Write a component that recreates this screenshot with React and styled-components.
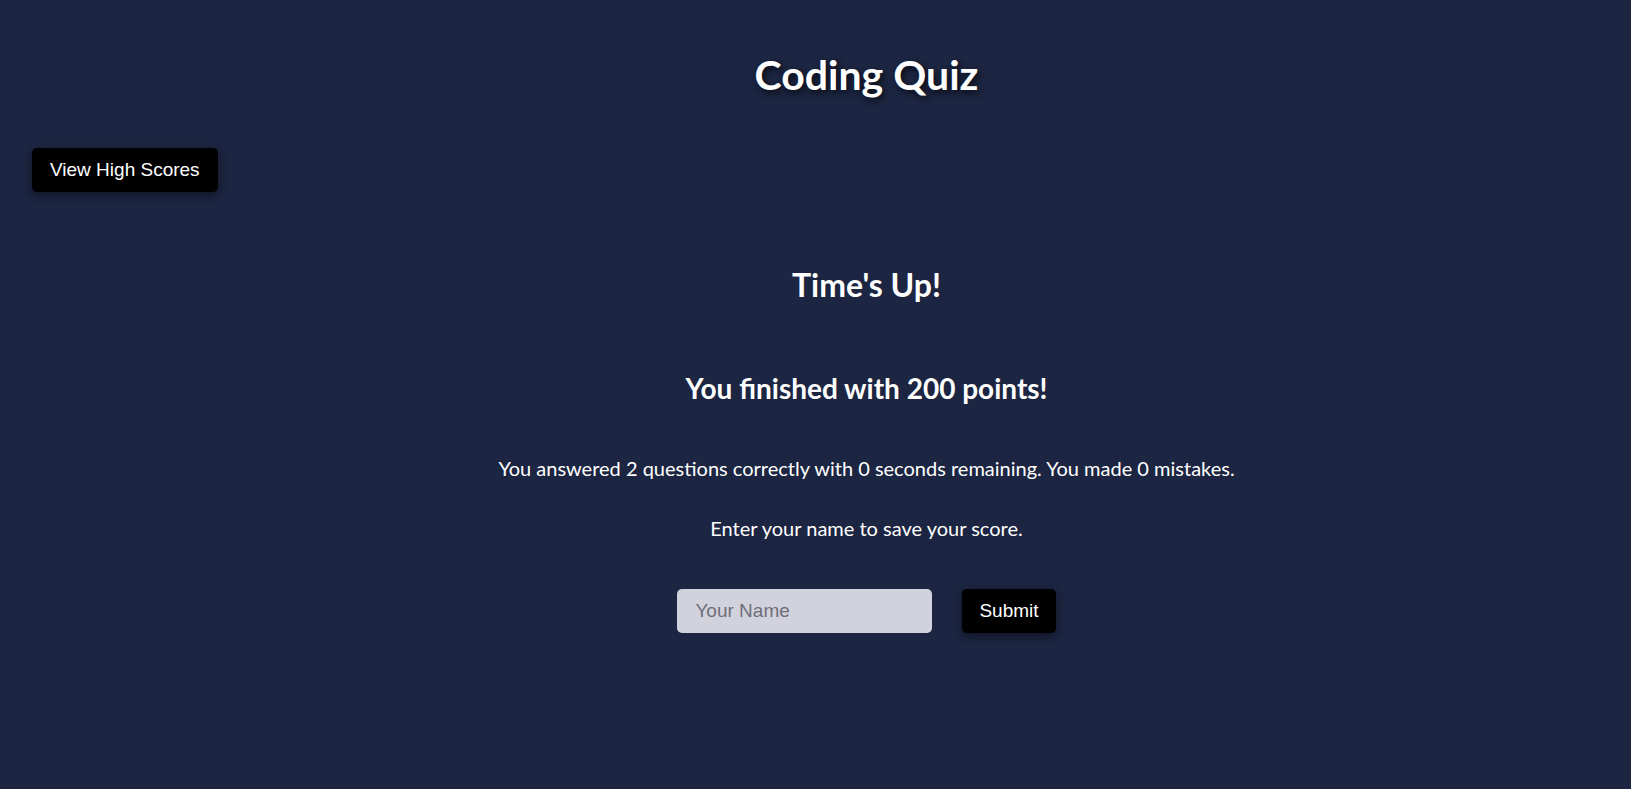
import React from 'react';
import styled, { createGlobalStyle } from 'styled-components';

const GlobalStyle = createGlobalStyle`
  html, body {
    margin: 0;
    padding: 0;
    background-color: #1c2541;
  }

  * {
    box-sizing: border-box;
  }
`;

const StyledPage = styled.div`
  min-height: 100vh;
  background-color: #1c2541;
  color: #ffffff;
  font-family: Lato, 'Open Sans', sans-serif;
`;

const StyledHeader = styled.header`
  padding: 50px 0 0 102px;
  text-align: center;
`;

const Title = styled.h1`
  margin: 0;
  font-size: 41px;
  line-height: 49px;
  font-weight: 700;
  text-shadow: 2px 3px 6px rgba(0, 0, 0, 0.7);
`;

const Toolbar = styled.nav`
  display: flex;
  padding: 49px 0 0 32px;
`;

const Button = styled.button`
  height: 44px;
  padding: 0 ${({ wide }) => (wide ? '18px' : '17px')};
  border: none;
  border-radius: 5px;
  background-color: #000000;
  color: #ffffff;
  font-family: 'Liberation Sans', Arial, sans-serif;
  font-size: 19px;
  box-shadow: 0 3px 8px rgba(0, 0, 0, 0.45);
  cursor: pointer;
`;

const Main = styled.main`
  display: flex;
  flex-direction: column;
  align-items: center;
  padding: 74px 0 0 102px;
  text-align: center;
`;

const Heading = styled.h2`
  margin: ${({ gap }) => gap}px 0 0;
  font-size: ${({ size }) => size}px;
  line-height: ${({ size }) => Math.round(size * 1.2)}px;
  font-weight: 700;
`;

const Paragraph = styled.p`
  margin: ${({ gap }) => gap}px 0 0;
  font-size: 20px;
  line-height: 24px;
`;

const Form = styled.form`
  display: flex;
  gap: 30px;
  margin-top: 49px;
`;

const NameInput = styled.input`
  width: 255px;
  height: 44px;
  padding: 0 18px;
  border: none;
  border-radius: 5px;
  background-color: #d2d2dc;
  color: #222222;
  font-family: 'Liberation Sans', Arial, sans-serif;
  font-size: 19px;

  &::placeholder {
    color: #6e6e78;
  }
`;

const App = () => (
  <StyledPage>
    <GlobalStyle />
    <StyledHeader>
      <Title>Coding Quiz</Title>
    </StyledHeader>
    <Toolbar>
      <Button wide>View High Scores</Button>
    </Toolbar>
    <Main>
      <Heading size={32} gap={0}>Time's Up!</Heading>
      <Heading size={28} gap={67}>You finished with 200 points!</Heading>
      <Paragraph gap={51}>
        You answered 2 questions correctly with 0 seconds remaining. You made 0 mistakes.
      </Paragraph>
      <Paragraph gap={36}>Enter your name to save your score.</Paragraph>
      <Form onSubmit={e => e.preventDefault()}>
        <NameInput type="text" placeholder="Your Name" />
        <Button type="submit">Submit</Button>
      </Form>
    </Main>
  </StyledPage>
);

export default App;
